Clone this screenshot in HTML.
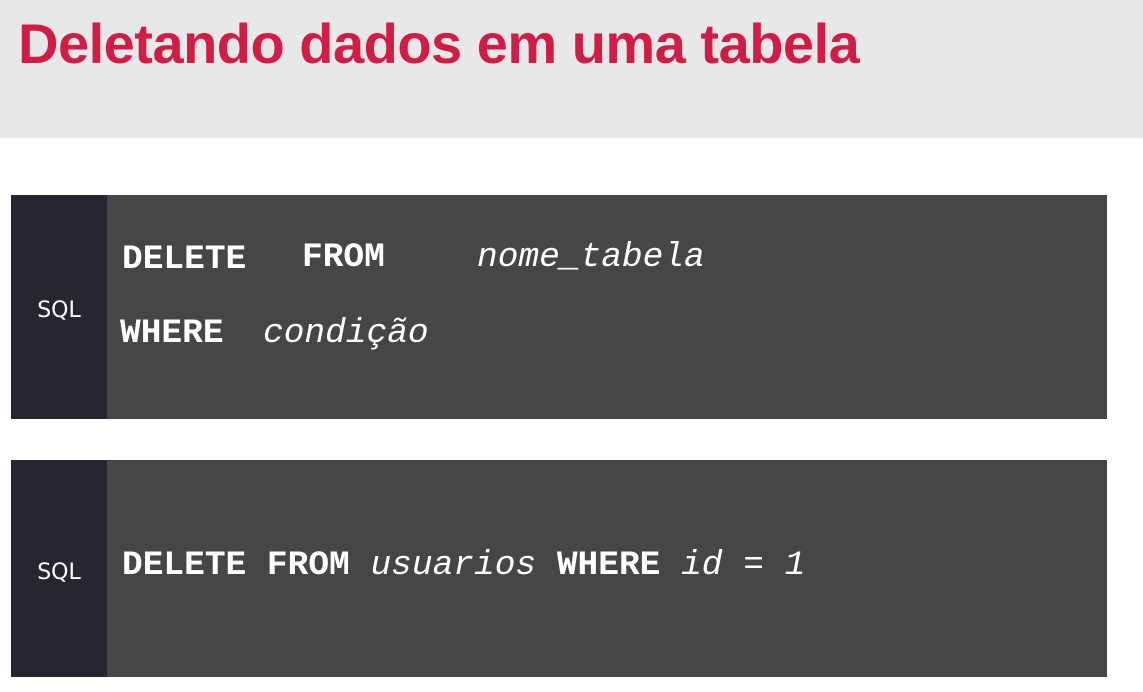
<!DOCTYPE html>
<html><head><meta charset="utf-8"><style>
body{margin:0;width:1143px;height:692px;background:#fff;position:relative;overflow:hidden;font-family:"Liberation Sans",sans-serif}
.hdr{position:absolute;left:0;top:0;width:1143px;height:138px;background:#e8e7e9}
.t{position:absolute;left:18px;top:11px;font-weight:bold;font-size:56px;color:#d11d44;white-space:nowrap;transform:scaleX(1.0);transform-origin:0 0;letter-spacing:-0.5px}
.box{position:absolute;left:11px;width:1096px;background:#464547}
.side{position:absolute;left:0;top:0;bottom:0;width:96px;background:#27252f}
.lbl{position:absolute;left:0;width:96px;text-align:center;color:#fff;font-size:22px;font-family:"DejaVu Sans",sans-serif}
.c{position:absolute;color:#fff;font-family:"Liberation Mono",monospace;font-size:34.5px;white-space:pre;line-height:1}
.b{font-weight:bold}.i{font-style:italic}
</style></head><body>
<div class="hdr"><div class="t">Deletando dados em uma tabela</div></div>
<div class="box" style="top:195px;height:224px">
<div class="side"></div>
<div class="lbl" style="top:103px">SQL</div>
</div>
<div class="c b" style="left:122px;top:243px">DELETE</div>
<div class="c b" style="left:302px;top:241px">FROM</div>
<div class="c i" style="left:477px;top:241px">nome_tabela</div>
<div class="c b" style="left:120px;top:317px">WHERE</div>
<div class="c i" style="left:263px;top:317px">condição</div>
<div class="box" style="top:460px;height:217px">
<div class="side"></div>
<div class="lbl" style="top:100px">SQL</div>
</div>
<div class="c" style="left:122px;top:549px"><span class="b">DELETE FROM</span> <span class="i">usuarios</span> <span class="b">WHERE</span> <span class="i">id = 1</span></div>
</body></html>
